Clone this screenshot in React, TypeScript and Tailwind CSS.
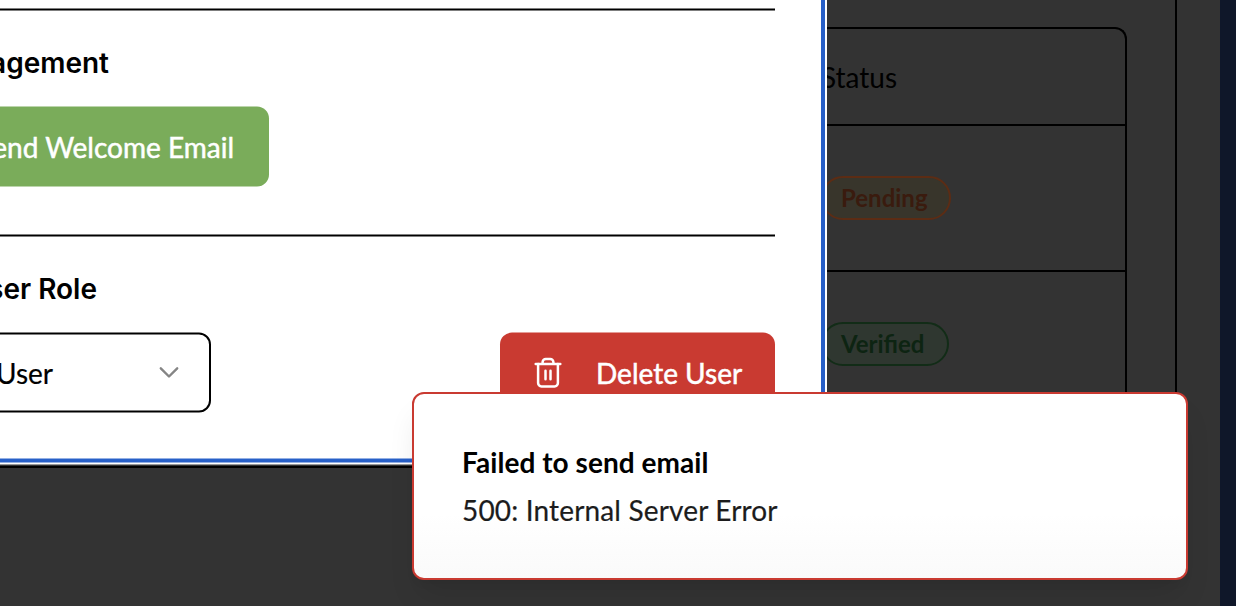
const tableRows = [
  { label: "Pending", tone: "border-[#5c2c14] bg-[#38352b] text-[#3a1b0e]", width: "w-[130px]" },
  { label: "Verified", tone: "border-[#122c17] bg-[#2f3730] text-[#0d2412]", width: "w-[128px]" },
];

function Background() {
  return (
    <div className="flex h-[606px] w-[1236px] bg-[#0f1729]">
      <div className="w-[1220px] bg-[#333333]">
        <div className="h-[468px] w-[1177px] border-r-2 border-b-2 border-black pt-[27px]">
          <div className="flex h-[417px] w-[1127px] flex-col rounded-tr-[12px] border-t-2 border-r-2 border-black">
            <div className="flex h-[97px] items-center border-b-2 border-black pl-[821px] text-[28px] leading-[40px] text-black">
              <span className="pt-[1px]">Status</span>
            </div>
            {tableRows.map((row) => (
              <div
                key={row.label}
                className="flex h-[146px] items-center border-b-2 border-black pl-[821px] last:border-b-0 last:pb-[2px]"
              >
                <span
                  className={`flex h-[44px] items-center rounded-full border-2 pl-[18px] text-[24px] font-bold leading-[32px] ${row.width} ${row.tone}`}
                >
                  {row.label}
                </span>
              </div>
            ))}
          </div>
        </div>
      </div>
    </div>
  );
}

function TrashIcon() {
  return (
    <svg
      className="h-[32px] w-[30px]"
      viewBox="0 0 30 32"
      fill="none"
      stroke="white"
      strokeWidth="2.5"
      strokeLinecap="round"
      strokeLinejoin="round"
    >
      <path d="M2.7 7.4H27.3" />
      <path d="M9.6 7.2V5.6A3.2 3.2 0 0 1 12.8 2.4H17.2A3.2 3.2 0 0 1 20.4 5.6V7.2" />
      <path d="M5.1 7.4V26.6A3.3 3.3 0 0 0 8.4 29.9H21.6A3.3 3.3 0 0 0 24.9 26.6V7.4" />
      <path d="M12.5 14.2V22.8M17.5 14.2V22.8" />
    </svg>
  );
}

function Dialog() {
  return (
    <div className="absolute top-[-10px] left-0 h-[468px] w-[821px] translate-y-[0.5px] bg-white pt-[18px] shadow-[0_0_0_4px_#2860c8,0_0_0_6px_#ffffff]">
      <div className="w-[775px] border-t-2 border-black pt-[32px]">
        <h3 className="ml-[-156px] h-[40px] font-['Inter'] text-[28px] font-semibold leading-[40px] text-black">
          <span className="block w-[265px] text-right">Management</span>
        </h3>
        <button className="mt-[24px] ml-[-60px] flex h-[80px] w-[329px] items-center justify-end rounded-[12px] bg-[#7aac5a] pr-[35px] text-[28px] leading-[40px] whitespace-nowrap text-white [-webkit-text-stroke:0.5px_white]">
          Send Welcome Email
        </button>
      </div>
      <div className="mt-[48px] w-[775px] border-t-2 border-black pt-[32px]">
        <h3 className="ml-[-156px] h-[40px] font-['Inter'] text-[28px] font-semibold leading-[40px] text-black">
          <span className="block w-[253px] text-right">User Role</span>
        </h3>
        <div className="mt-[24px] flex h-[80px] justify-between">
          <div className="ml-[-31px] flex w-[242px] items-center justify-between rounded-[12px] border-2 border-black pr-[25px] pl-[25px] text-[28px] leading-[40px] text-black [-webkit-text-stroke:0.2px_black]">
            <span>User</span>
            <svg
              className="size-[30px]"
              viewBox="0 0 30 30"
              fill="none"
              stroke="#858585"
              strokeWidth="2.4"
              strokeLinecap="round"
              strokeLinejoin="round"
            >
              <path d="M6.8 10.8 15 19 23.2 10.8" />
            </svg>
          </div>
          <button className="flex w-[275px] items-center rounded-[12px] bg-[#c93a31] pl-[33px] text-[28px] leading-[40px] whitespace-nowrap text-white [-webkit-text-stroke:0.5px_white]">
            <TrashIcon />
            <span className="ml-[33px]">Delete User</span>
          </button>
        </div>
      </div>
    </div>
  );
}

function Toast() {
  return (
    <div className="absolute top-[392px] left-[412px] flex h-[188px] w-[776px] flex-col justify-center rounded-[12px] border-2 border-[#c93a31] bg-linear-to-b from-white from-65% to-[#fafafa] pl-[48px] shadow-[0_20px_30px_-6px_rgba(0,0,0,0.1),0_8px_12px_-8px_rgba(0,0,0,0.1)]">
      <p className="text-[28px] font-bold leading-[48px] tracking-[0.05px] text-black">Failed to send email</p>
      <p className="text-[28px] leading-[48px] tracking-[0.16px] text-[#1c1c1c] [-webkit-text-stroke:0.2px_#1c1c1c]">
        500: Internal Server Error
      </p>
    </div>
  );
}

export default function App() {
  return (
    <div className="relative h-[606px] w-[1236px] overflow-hidden font-['Lato',sans-serif]">
      <Background />
      <Dialog />
      <Toast />
    </div>
  );
}
